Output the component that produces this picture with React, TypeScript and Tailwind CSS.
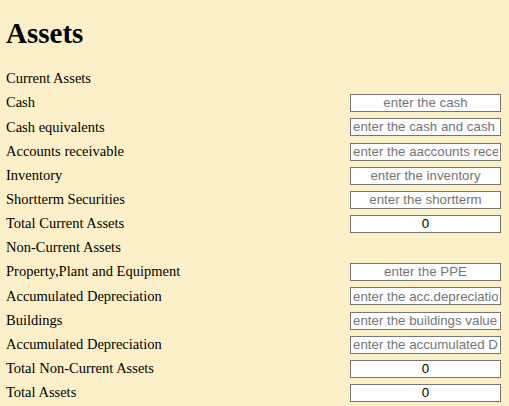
import React from 'react';

type Row = {
  label: string;
  placeholder?: string;
  value?: string;
  center?: boolean;
};

const rows: Row[] = [
  { label: 'Current Assets' },
  { label: 'Cash', placeholder: 'enter the cash', center: true },
  { label: 'Cash equivalents', placeholder: 'enter the cash and cash equivalents' },
  { label: 'Accounts receivable', placeholder: 'enter the aaccounts receivable' },
  { label: 'Inventory', placeholder: 'enter the inventory', center: true },
  { label: 'Shortterm Securities', placeholder: 'enter the shortterm', center: true },
  { label: 'Total Current Assets', value: '0' },
  { label: 'Non-Current Assets' },
  { label: 'Property,Plant and Equipment', placeholder: 'enter the PPE', center: true },
  { label: 'Accumulated Depreciation', placeholder: 'enter the acc.depreciation' },
  { label: 'Buildings', placeholder: 'enter the buildings value' },
  { label: 'Accumulated Depreciation', placeholder: 'enter the accumulated Depreciation' },
  { label: 'Total Non-Current Assets', value: '0' },
  { label: 'Total Assets', value: '0' },
];

export default function App() {
  return (
    <div className="min-h-[406px] bg-[#fcf0c8] pl-[6px] pr-[8px] pt-[20px] font-['Liberation_Serif',serif] text-[14.5px] text-black">
      <h1 className="mb-[20px] text-[29px] font-bold leading-[27px]">Assets</h1>
      <div className="flex flex-col">
        {rows.map((r, i) => (
          <div key={i} className="flex h-[24.17px] items-center justify-between">
            <span>{r.label}</span>
            {(r.placeholder || r.value) && (
              <input
                readOnly={!!r.value}
                defaultValue={r.value}
                placeholder={r.placeholder}
                className={`h-[18px] w-[151px] border border-[#767676] bg-white px-[2px] font-['Liberation_Sans',sans-serif] text-[13.3px] text-black placeholder:text-[#757575] ${
                  r.center || r.value ? 'text-center' : 'text-left'
                }`}
              />
            )}
          </div>
        ))}
      </div>
    </div>
  );
}
